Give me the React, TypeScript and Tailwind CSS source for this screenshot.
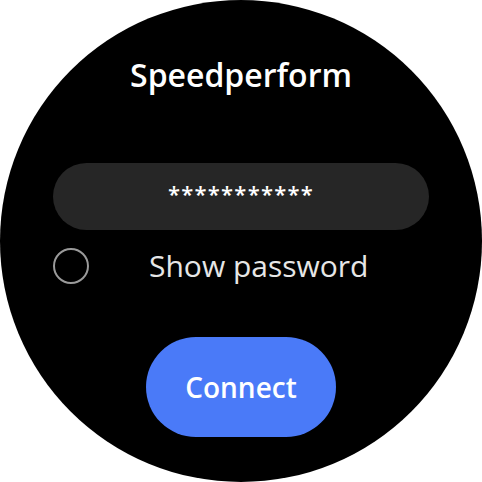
import React from 'react'

export default function App() {
  return (
    <div className="w-[482px] h-[482px] bg-white">
      <div
        className="w-[482px] h-[482px] rounded-full bg-black flex flex-col items-center"
        style={{ fontFamily: '"Open Sans", Roboto, sans-serif' }}
      >
        <h1 className="mt-[54px] text-[32px] leading-[42px] font-semibold text-white">
          Speedperform
        </h1>

        <div className="mt-[67px] w-[376px] h-[67px] rounded-full bg-[#262626] flex items-center justify-center">
          <span className="text-white text-[22px] font-semibold tracking-[1.2px] mt-[-6px]">***********</span>
        </div>

        <label className="mt-[18px] w-[376px] flex items-center">
          <span className="w-[36px] h-[36px] rounded-full border-2 border-[#9a9a9a] shrink-0" />
          <span className="ml-[60px] text-[30px] leading-[36px] text-[#e6e6e6]">Show password</span>
        </label>

        <button className="mt-[53px] w-[190px] h-[100px] rounded-full bg-[#4a7af8] text-white text-[28px] font-semibold">
          Connect
        </button>
      </div>
    </div>
  )
}
